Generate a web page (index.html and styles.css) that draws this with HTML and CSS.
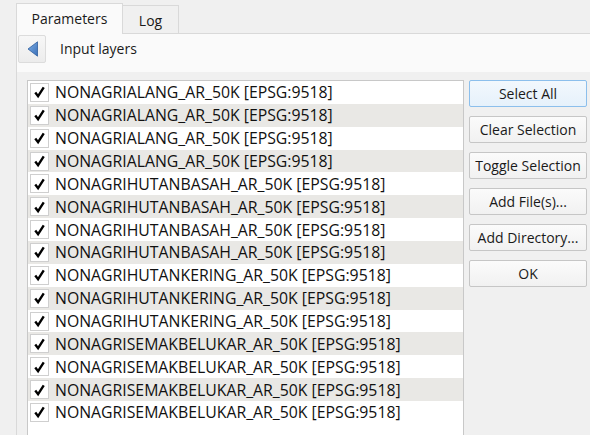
FILE: index.html
```html
<!DOCTYPE html>
<html>
<head>
<meta charset="utf-8">
<link rel="stylesheet" href="styles.css">
</head>
<body>
<div class="window">
  <div class="tabbar">
    <div class="tab tab-active">Parameters</div>
    <div class="tab tab-inactive">Log</div>
    <div class="tab-fill"></div>
  </div>
  <div class="pane">
    <div class="header">
      <button class="back" type="button">
        <svg width="12" height="16" viewBox="0 0 12 16">
          <defs>
            <linearGradient id="bg" x1="0" y1="0" x2="1" y2="1">
              <stop offset="0" stop-color="#7fb0e6"/>
              <stop offset="1" stop-color="#3a6fb8"/>
            </linearGradient>
          </defs>
          <path d="M10.5 0.8 L10.5 15.2 L1 8 Z" fill="url(#bg)" stroke="#2f5e9e" stroke-width="0.8" stroke-linejoin="round"/>
        </svg>
      </button>
      <span class="header-title">Input layers</span>
    </div>
    <div class="main">
      <div class="list">
        <div class="row"><span class="check"><svg viewBox="0 0 18 18" width="18" height="18"><path d="M4.5 9.5 L7.5 13.5 L13.5 4" fill="none" stroke="#000" stroke-width="2.5"/></svg></span><span class="label">NONAGRIALANG_AR_50K [EPSG:9518]</span></div>
        <div class="row"><span class="check"><svg viewBox="0 0 18 18" width="18" height="18"><path d="M4.5 9.5 L7.5 13.5 L13.5 4" fill="none" stroke="#000" stroke-width="2.5"/></svg></span><span class="label">NONAGRIALANG_AR_50K [EPSG:9518]</span></div>
        <div class="row"><span class="check"><svg viewBox="0 0 18 18" width="18" height="18"><path d="M4.5 9.5 L7.5 13.5 L13.5 4" fill="none" stroke="#000" stroke-width="2.5"/></svg></span><span class="label">NONAGRIALANG_AR_50K [EPSG:9518]</span></div>
        <div class="row"><span class="check"><svg viewBox="0 0 18 18" width="18" height="18"><path d="M4.5 9.5 L7.5 13.5 L13.5 4" fill="none" stroke="#000" stroke-width="2.5"/></svg></span><span class="label">NONAGRIALANG_AR_50K [EPSG:9518]</span></div>
        <div class="row"><span class="check"><svg viewBox="0 0 18 18" width="18" height="18"><path d="M4.5 9.5 L7.5 13.5 L13.5 4" fill="none" stroke="#000" stroke-width="2.5"/></svg></span><span class="label">NONAGRIHUTANBASAH_AR_50K [EPSG:9518]</span></div>
        <div class="row"><span class="check"><svg viewBox="0 0 18 18" width="18" height="18"><path d="M4.5 9.5 L7.5 13.5 L13.5 4" fill="none" stroke="#000" stroke-width="2.5"/></svg></span><span class="label">NONAGRIHUTANBASAH_AR_50K [EPSG:9518]</span></div>
        <div class="row"><span class="check"><svg viewBox="0 0 18 18" width="18" height="18"><path d="M4.5 9.5 L7.5 13.5 L13.5 4" fill="none" stroke="#000" stroke-width="2.5"/></svg></span><span class="label">NONAGRIHUTANBASAH_AR_50K [EPSG:9518]</span></div>
        <div class="row"><span class="check"><svg viewBox="0 0 18 18" width="18" height="18"><path d="M4.5 9.5 L7.5 13.5 L13.5 4" fill="none" stroke="#000" stroke-width="2.5"/></svg></span><span class="label">NONAGRIHUTANBASAH_AR_50K [EPSG:9518]</span></div>
        <div class="row"><span class="check"><svg viewBox="0 0 18 18" width="18" height="18"><path d="M4.5 9.5 L7.5 13.5 L13.5 4" fill="none" stroke="#000" stroke-width="2.5"/></svg></span><span class="label">NONAGRIHUTANKERING_AR_50K [EPSG:9518]</span></div>
        <div class="row"><span class="check"><svg viewBox="0 0 18 18" width="18" height="18"><path d="M4.5 9.5 L7.5 13.5 L13.5 4" fill="none" stroke="#000" stroke-width="2.5"/></svg></span><span class="label">NONAGRIHUTANKERING_AR_50K [EPSG:9518]</span></div>
        <div class="row"><span class="check"><svg viewBox="0 0 18 18" width="18" height="18"><path d="M4.5 9.5 L7.5 13.5 L13.5 4" fill="none" stroke="#000" stroke-width="2.5"/></svg></span><span class="label">NONAGRIHUTANKERING_AR_50K [EPSG:9518]</span></div>
        <div class="row"><span class="check"><svg viewBox="0 0 18 18" width="18" height="18"><path d="M4.5 9.5 L7.5 13.5 L13.5 4" fill="none" stroke="#000" stroke-width="2.5"/></svg></span><span class="label">NONAGRISEMAKBELUKAR_AR_50K [EPSG:9518]</span></div>
        <div class="row"><span class="check"><svg viewBox="0 0 18 18" width="18" height="18"><path d="M4.5 9.5 L7.5 13.5 L13.5 4" fill="none" stroke="#000" stroke-width="2.5"/></svg></span><span class="label">NONAGRISEMAKBELUKAR_AR_50K [EPSG:9518]</span></div>
        <div class="row"><span class="check"><svg viewBox="0 0 18 18" width="18" height="18"><path d="M4.5 9.5 L7.5 13.5 L13.5 4" fill="none" stroke="#000" stroke-width="2.5"/></svg></span><span class="label">NONAGRISEMAKBELUKAR_AR_50K [EPSG:9518]</span></div>
        <div class="row"><span class="check"><svg viewBox="0 0 18 18" width="18" height="18"><path d="M4.5 9.5 L7.5 13.5 L13.5 4" fill="none" stroke="#000" stroke-width="2.5"/></svg></span><span class="label">NONAGRISEMAKBELUKAR_AR_50K [EPSG:9518]</span></div>
      </div>
      <div class="buttons">
        <button class="btn btn-default" type="button">Select All</button>
        <button class="btn" type="button">Clear Selection</button>
        <button class="btn" type="button">Toggle Selection</button>
        <button class="btn" type="button">Add File(s)...</button>
        <button class="btn" type="button">Add Directory...</button>
        <button class="btn" type="button">OK</button>
      </div>
    </div>
  </div>
</div>
</body>
</html>
```
FILE: styles.css
```css
html, body {
  margin: 0;
  padding: 0;
  background: #f0f0f0;
  height: 435px;
  overflow: hidden;
  font-family: "Open Sans", "Noto Sans", sans-serif;
  font-size: 14px;
  color: #1a1a1a;
}

.window {
  padding-left: 16px;
  height: 435px;
  box-sizing: border-box;
  overflow: hidden;
}

.tabbar {
  display: flex;
  align-items: flex-end;
  height: 34px;
}

.tab {
  box-sizing: border-box;
  display: flex;
  align-items: center;
  justify-content: center;
  border: 1px solid #d9d9d9;
}

.tab-active {
  width: 107px;
  height: 31px;
  background: #fafafa;
  border-bottom: none;
  padding-bottom: 1px;
}

.tab-inactive {
  width: 56px;
  height: 29px;
  background: #f0f0f0;
  border-left: none;
  padding-top: 1px;
}

.tab-fill {
  flex: 1;
  height: 1px;
  background: #d9d9d9;
}

.pane {
  border-left: 1px solid #d9d9d9;
  height: 401px;
  display: flex;
  flex-direction: column;
  overflow: hidden;
}

.header {
  flex-shrink: 0;
  height: 38px;
  background: #fafafa;
  display: flex;
  align-items: flex-start;
  padding-top: 1px;
  padding-left: 1px;
  box-sizing: border-box;
}

.back {
  box-sizing: border-box;
  width: 28px;
  height: 28px;
  border: 1px solid #dcdcdc;
  border-radius: 2px;
  background: linear-gradient(#f7f7f7, #ececec);
  padding: 0 0 0 1px;
  margin: 0;
  display: flex;
  align-items: center;
  justify-content: center;
}

.back svg {
  display: block;
}

.header-title {
  margin-left: 14px;
  line-height: 28px;
}

.main {
  flex: 1;
  min-height: 0;
  display: flex;
  align-items: flex-start;
  padding: 8px 0 0 10px;
  gap: 5px;
}

.list {
  box-sizing: border-box;
  width: 437px;
  height: 360px;
  background: #ffffff;
  border: 1px solid #c8c8c8;
  border-bottom: none;
}

.row {
  height: 22.86px;
  display: flex;
  align-items: center;
}

.row:nth-child(even) {
  background: #e9e8e5;
}

.check {
  box-sizing: border-box;
  width: 19px;
  height: 19px;
  margin-left: 2px;
  border: 1px solid #cfcfcf;
  background: #ffffff;
  display: flex;
  align-items: center;
  justify-content: center;
}

.check svg {
  display: block;
}

.label {
  margin-left: 6px;
  font-size: 15.8px;
  color: #111111;
  white-space: nowrap;
}

.buttons {
  width: 118px;
  display: flex;
  flex-direction: column;
  gap: 9px;
}

.btn {
  box-sizing: border-box;
  height: 27px;
  width: 100%;
  border: 1px solid #c6c6c6;
  border-radius: 2px;
  background: linear-gradient(#fbfbfb, #f1f1f1);
  font-family: "Open Sans", "Noto Sans", sans-serif;
  font-size: 14px;
  color: #1a1a1a;
  padding: 0;
  margin: 0;
}

.btn-default {
  border-color: #8cbfec;
  background: linear-gradient(#f2f8fd, #e6f1fb);
}
```
